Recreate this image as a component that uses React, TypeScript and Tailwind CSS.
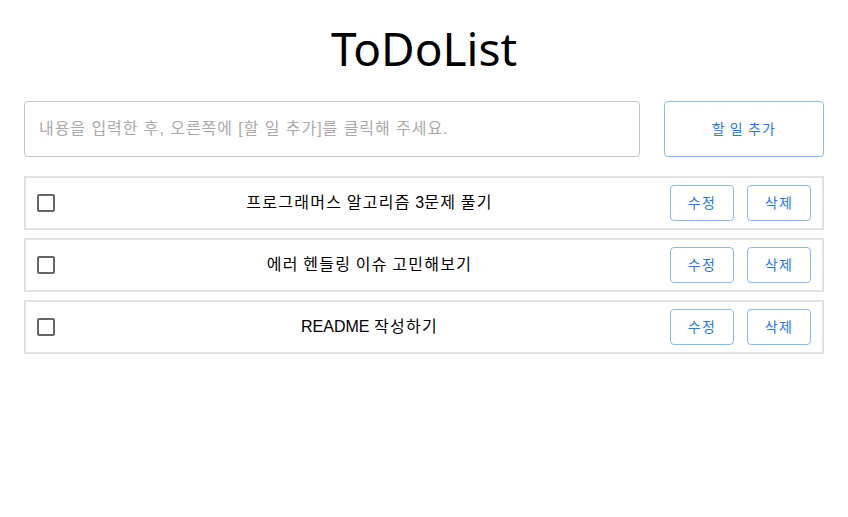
import React from "react";

const items = [
  "프로그래머스 알고리즘 3문제 풀기",
  "에러 헨들링 이슈 고민해보기",
  "README 작성하기",
];

function K({ text }: { text: string }) {
  const parts = text.split(/([\uAC00-\uD7A3]+)/);
  return (
    <>
      {parts.map((p, i) =>
        /[\uAC00-\uD7A3]/.test(p) ? (
          <span key={i} className="tracking-[1.3px]">
            {p}
          </span>
        ) : (
          <React.Fragment key={i}>{p}</React.Fragment>
        )
      )}
    </>
  );
}

export default function App() {
  return (
    <div
      className="w-[848px] min-h-[517px] bg-white px-6"
      style={{ fontFamily: '"Liberation Sans", "Noto Sans CJK KR", sans-serif' }}
    >
      <h1
        className="pt-[16px] text-center text-[46px] leading-[64px] text-black"
        style={{ fontFamily: '"Noto Sans", "Open Sans", sans-serif' }}
      >
        ToDoList
      </h1>
      <div className="mt-[21px] flex gap-6">
        <input
          className="h-[56px] flex-1 rounded-[4px] border border-[#c4c4c4] px-[14px] text-[16px] tracking-[0.95px] outline-none placeholder:text-[#a9a9a9]"
          placeholder="내용을 입력한 후, 오른쪽에 [할 일 추가]를 클릭해 주세요."
        />
        <button className="h-[56px] w-[160px] rounded-[4px] border border-[#8ab9ee] bg-white text-[14px] text-[#2a78de]">
          <K text="할 일 추가" />
        </button>
      </div>
      <ul className="mt-[19px] flex flex-col gap-2">
        {items.map((t) => (
          <li
            key={t}
            className="flex h-[54px] items-center border-2 border-[#dee2e6] px-[11px]"
          >
            <span className="h-[18px] w-[18px] rounded-[2px] border-2 border-[#666]" />
            <span className="flex-1 pl-[14px] text-center text-[16px] text-black">
              <K text={t} />
            </span>
            <div className="flex gap-[13px]">
              <button className="h-[36px] w-[64px] rounded-[4px] border border-[#8ab9ee] bg-white text-[14px] text-[#2a78de]">
                <K text="수정" />
              </button>
              <button className="h-[36px] w-[64px] rounded-[4px] border border-[#8ab9ee] bg-white text-[14px] text-[#2a78de]">
                <K text="삭제" />
              </button>
            </div>
          </li>
        ))}
      </ul>
    </div>
  );
}
